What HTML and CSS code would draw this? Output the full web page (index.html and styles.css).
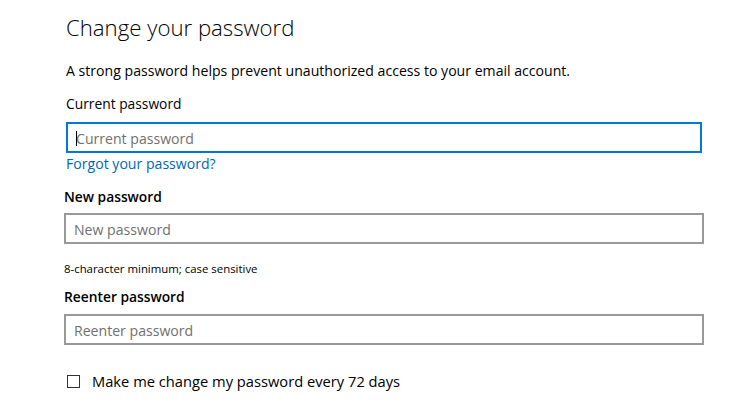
FILE: index.html
```html
<!DOCTYPE html>
<html lang="en">
<head>
<meta charset="utf-8">
<title>Change your password</title>
<link rel="stylesheet" href="styles.css">
</head>
<body>
<main class="page">
  <section class="top">
    <h1 class="title">Change your password</h1>
    <p class="desc">A strong password helps prevent unauthorized access to your email account.</p>
    <label class="label current" for="cur">Current password</label>
    <div class="field field-focus"><span class="caret"></span><input id="cur" class="input" type="password" placeholder="Current password"></div>
    <a class="link" href="#">Forgot your password?</a>
  </section>
  <section class="rest">
    <label class="label strong first" for="new">New password</label>
    <div class="field field-new"><input id="new" class="input" type="password" placeholder="New password"></div>
    <p class="hint">8-character minimum; case sensitive</p>
    <label class="label strong second" for="re">Reenter password</label>
    <div class="field field-re"><input id="re" class="input" type="password" placeholder="Reenter password"></div>
    <label class="check">
      <span class="box"></span>
      <span class="check-text">Make me change my password every 72 days</span>
    </label>
  </section>
</main>
</body>
</html>
```
FILE: styles.css
```css
html, body {
  margin: 0;
  padding: 0;
  background: #ffffff;
}
body {
  font-family: "Open Sans", "Noto Sans", sans-serif;
  color: #000000;
}
.page {
  padding-left: 64px;
  width: 640px;
}
.top {
  padding-left: 2px;
  width: 636px;
  display: flex;
  flex-direction: column;
  align-items: flex-start;
}
.title {
  margin: 12px 0 0 0;
  font-size: 22.2px;
  line-height: 32px;
  font-weight: 300;
}
.desc {
  margin: 17px 0 0 0;
  font-size: 14.1px;
  line-height: 20px;
}
.label {
  display: block;
  font-size: 13.8px;
  line-height: 20px;
}
.current {
  margin-top: 13px;
}
.field {
  box-sizing: border-box;
  width: 100%;
  height: 31px;
  border: 2px solid #999999;
  display: flex;
  align-items: center;
  padding: 2px 0 0 8px;
  position: relative;
}
.field-focus {
  margin-top: 8px;
  border-color: #0078d7;
}
.caret {
  position: absolute;
  left: 8px;
  top: 7px;
  width: 1px;
  height: 15px;
  background: #000;
}
.input {
  border: 0;
  outline: none;
  padding: 0;
  margin: 0;
  width: 100%;
  font-family: inherit;
  font-size: 14.1px;
  line-height: 20px;
  background: transparent;
  color: #000;
}
.input::placeholder {
  color: #707070;
  opacity: 1;
}
.link {
  margin-top: 1px;
  font-size: 14.1px;
  line-height: 20px;
  color: #0067b8;
  text-decoration: none;
}
.rest {
  display: flex;
  flex-direction: column;
  align-items: flex-start;
}
.strong {
  font-weight: 600;
}
.first {
  margin-top: 13px;
}
.field-new {
  margin-top: 6px;
}
.hint {
  margin: 17px 0 0 0;
  font-size: 11.4px;
  line-height: 16px;
}
.second {
  margin-top: 10px;
}
.field-re {
  margin-top: 7px;
}
.check {
  margin-top: 26px;
  display: flex;
  align-items: center;
  gap: 12px;
  padding-left: 3px;
  font-size: 14.7px;
  line-height: 20px;
}
.box {
  box-sizing: border-box;
  width: 13px;
  height: 13px;
  border: 1px solid #333333;
}
```
